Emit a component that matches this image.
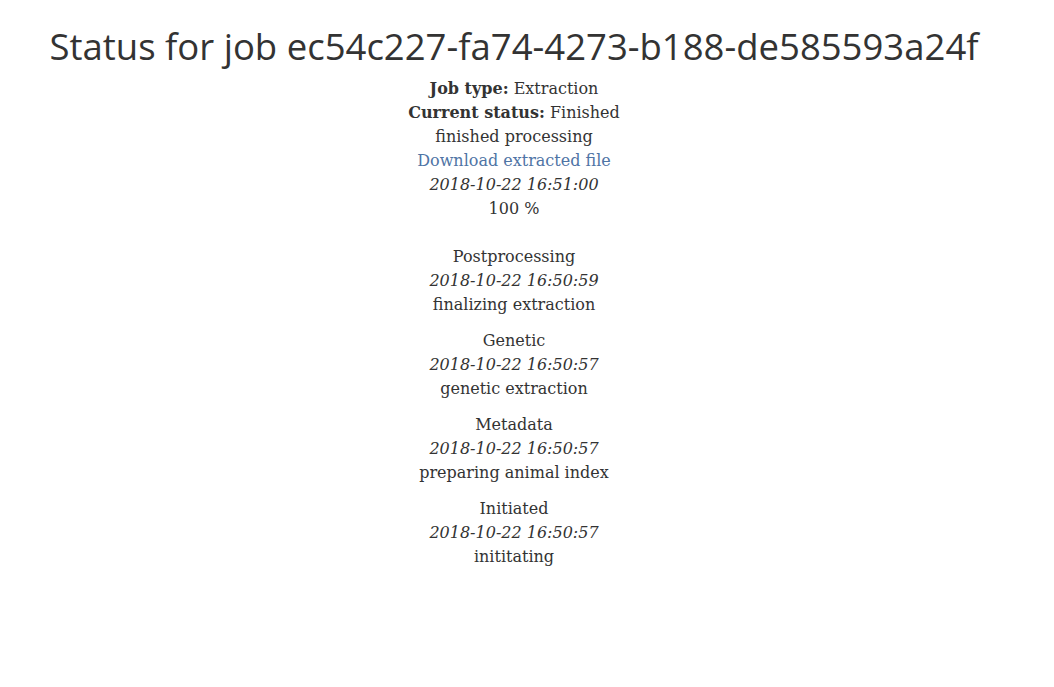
const steps = [
  { name: "Postprocessing", time: "2018-10-22 16:50:59", message: "finalizing extraction" },
  { name: "Genetic", time: "2018-10-22 16:50:57", message: "genetic extraction" },
  { name: "Metadata", time: "2018-10-22 16:50:57", message: "preparing animal index" },
  { name: "Initiated", time: "2018-10-22 16:50:57", message: "inititating" },
];

const App = () => {
  return (
    <div className="w-[1028px] text-center text-[#333] font-['DejaVu_Serif',serif] text-[16px] leading-[24px]">
      <h1 className="pt-[24px] pb-[9px] font-['Open_Sans',sans-serif] text-[36.5px] leading-[44px] text-[#333]">
        Status for job ec54c227-fa74-4273-b188-de585593a24f
      </h1>
      <div>
        <div>
          <b>Job type:</b> Extraction
        </div>
        <div>
          <b>Current status:</b> Finished
        </div>
        <div>finished processing</div>
        <div>
          <a href="#" className="text-[#4f74a5]">
            Download extracted file
          </a>
        </div>
        <div className="italic">2018-10-22 16:51:00</div>
        <div>100 %</div>
      </div>
      <div className="mt-[24px]">
        {steps.map((step) => (
          <div key={step.name} className="mb-[12px]">
            <div>{step.name}</div>
            <div className="italic">{step.time}</div>
            <div>{step.message}</div>
          </div>
        ))}
      </div>
    </div>
  );
};

export default App;
